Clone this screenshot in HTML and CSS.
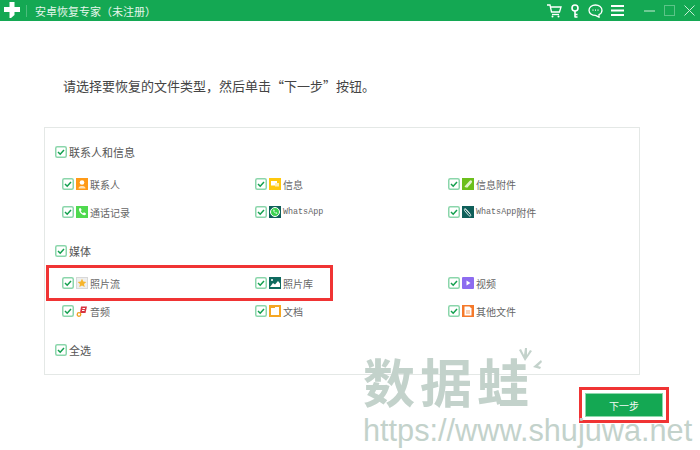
FILE: index.html
```html
<!DOCTYPE html>
<html lang="zh-CN">
<head>
    <meta charset="UTF-8">
    <title>安卓恢复专家</title>
    <link rel="stylesheet" href="styles.css">
</head>
<body>
    <svg class="defs" width="0" height="0">
        <symbol id="chk" viewBox="0 0 12 12">
            <rect x="0.75" y="0.75" width="10.5" height="10.5" rx="1.5" fill="#fff" stroke="#8bd6ab" stroke-width="1.5"/>
            <path d="M3 6l2.2 2.2L9 4" fill="none" stroke="#14a04f" stroke-width="1.5"/>
        </symbol>
    </svg>

    <header class="titlebar">
        <svg class="logo" width="16" height="16" viewBox="0 0 16 16"><path d="M5.5 0h5v5H16v5h-5.5v3L7 16H5.500v-6H0V5h5.500z" fill="#fff"/></svg>
        <span class="sep"></span>
        <span class="app-name">安卓恢复专家（未注册）</span>
        <div class="tools">
            <svg width="15" height="14" viewBox="0 0 15 14" fill="none" stroke="#fff" stroke-width="1.300"><path d="M0 1h3l1.500 7h8L14 3H4"/><path d="M5 10.500h7"/><circle cx="5.500" cy="12.500" r="1" fill="#fff" stroke="none"/><circle cx="11.500" cy="12.500" r="1" fill="#fff" stroke="none"/></svg>
            <svg width="10" height="14" viewBox="0 0 10 14" fill="none" stroke="#fff" stroke-width="1.600"><circle cx="5" cy="4" r="3"/><path d="M5 7v6.500M5 10.500h2.500M5 13h2.500"/></svg>
            <svg width="15" height="14" viewBox="0 0 15 14" fill="none" stroke="#fff" stroke-width="1.300"><path d="M7.500 1C3.800 1 1 3.300 1 6.200c0 2.900 2.800 5.200 6.500 5.200l3.500 1.800v-2.600c2-.9 3-2.500 3-4.400C14 3.300 11.200 1 7.500 1z"/><path d="M4.500 6.200h1M7 6.200h1M9.500 6.200h1"/></svg>
            <svg width="13" height="11" viewBox="0 0 13 11" fill="#fff"><rect width="13" height="2"/><rect y="4.500" width="13" height="2"/><rect y="9" width="13" height="2"/></svg>
        </div>
        <div class="win-btns">
            <svg width="11" height="11" viewBox="0 0 11 11"><path d="M0 6h11" stroke="#c9ecd6" stroke-width="1"/></svg>
            <svg width="11" height="11" viewBox="0 0 11 11"><rect x=".5" y=".5" width="10" height="10" fill="none" stroke="#5cc488"/></svg>
            <svg width="11" height="11" viewBox="0 0 11 11"><path d="M.5.500l10 10M10.500.500l-10 10" stroke="#c9ecd6" stroke-width="1"/></svg>
        </div>
    </header>

    <main class="content">
        <p class="intro">请选择要恢复的文件类型，然后单击“下一步”按钮。</p>

        <div class="panel">
            <section class="group">
                <div class="group-head"><svg class="chk"><use href="#chk"/></svg>联系人和信息</div>
                <div class="items">
                    <div class="item"><svg class="chk"><use href="#chk"/></svg>
                        <svg class="ico" viewBox="0 0 12 12"><rect width="12" height="12" fill="#ff9a17"/><circle cx="6" cy="4.500" r="2.300" fill="#fff"/><path d="M2.500 10.500c0-2 2-2.500 3.500-2.500s3.500.5 3.500 2.500z" fill="#ffe2b8"/></svg>联系人</div>
                    <div class="item"><svg class="chk"><use href="#chk"/></svg>
                        <svg class="ico" viewBox="0 0 12 12"><rect width="12" height="12" fill="#ffc80d"/><rect x="2" y="3" width="6" height="4.500" fill="#fff"/><rect x="6" y="5" width="4" height="3.500" fill="#ffeeb0"/></svg>信息</div>
                    <div class="item"><svg class="chk"><use href="#chk"/></svg>
                        <svg class="ico" viewBox="0 0 12 12"><rect width="12" height="12" fill="#6cbf1c"/><path d="M3 9l5-5.500c1-1 2 0 1 1L4.500 9.500" fill="none" stroke="#e4f5cf" stroke-width="1.300"/></svg>信息附件</div>
                    <div class="item"><svg class="chk"><use href="#chk"/></svg>
                        <svg class="ico" viewBox="0 0 12 12"><rect width="12" height="12" fill="#4fd94f"/><path d="M3 2.500l1.500-.5 1.200 2-1 1c.4 1 1.300 1.900 2.300 2.300l1-1 2 1.200-.5 1.500C6.500 10 2.500 6 3 2.500z" fill="#fff"/></svg>通话记录</div>
                    <div class="item"><svg class="chk"><use href="#chk"/></svg>
                        <svg class="ico" viewBox="0 0 12 12"><rect width="12" height="12" fill="#0f5f5a"/><circle cx="6" cy="6" r="4.500" fill="#3bd24f" stroke="#fff"/><path d="M4.300 3.800l.8-.2.600 1.200-.5.600c.3.600.8 1.100 1.400 1.400l.6-.5 1.100.6-.2.800c-2 .3-4-1.900-3.800-3.900z" fill="#fff"/></svg><span class="mono">WhatsApp</span></div>
                    <div class="item"><svg class="chk"><use href="#chk"/></svg>
                        <svg class="ico" viewBox="0 0 12 12"><rect width="12" height="12" fill="#0f5f5a"/><path d="M3 2.500l5.500 6c1 1.200-.5 2.200-1.500 1.200L2.500 4.500c-.8-1 .5-2.200 1.500-1.200l4 4.500" fill="none" stroke="#e3f0ee" stroke-width="1"/></svg><span class="mono">WhatsApp</span>附件</div>
                </div>
            </section>

            <section class="group">
                <div class="group-head"><svg class="chk"><use href="#chk"/></svg>媒体</div>
                <div class="items">
                    <div class="item"><svg class="chk"><use href="#chk"/></svg>
                        <svg class="ico" viewBox="0 0 12 12"><rect x=".5" y=".5" width="11" height="11" fill="#eee" stroke="#d8d8d8"/><path d="M6 1.800l1.300 2.800 3 .3-2.300 2 .7 3L6 8.400 3.300 9.900l.7-3-2.300-2 3-.3z" fill="#f6b42c"/></svg>照片流</div>
                    <div class="item"><svg class="chk"><use href="#chk"/></svg>
                        <svg class="ico" viewBox="0 0 12 12"><rect width="12" height="12" fill="#0f6a5f"/><path d="M1 10l3-4 2 1.500L9 4l2 2.500V10z" fill="#fff"/><circle cx="3" cy="3" r="1" fill="#fff"/></svg>照片库</div>
                    <div class="item"><svg class="chk"><use href="#chk"/></svg>
                        <svg class="ico" viewBox="0 0 12 12"><rect width="12" height="12" rx="1" fill="#8d6cf0"/><path d="M4.500 3.500l4 2.500-4 2.500z" fill="#fff"/></svg>视频</div>
                    <div class="item"><svg class="chk"><use href="#chk"/></svg>
                        <svg class="ico" viewBox="0 0 12 12" fill="none"><path d="M5 1.500h6L9.500 8H4z" fill="#d9343f"/><path d="M6.500 3.500h2.500M6 5.500h2.500" stroke="#fff"/><circle cx="3" cy="9.500" r="1.800" stroke="#f0a020" stroke-width="1.300"/></svg>音频</div>
                    <div class="item"><svg class="chk"><use href="#chk"/></svg>
                        <svg class="ico" viewBox="0 0 12 12"><rect x="1" y="1" width="10" height="10" fill="#fff" stroke="#f5a623" stroke-width="2"/><rect y="0" width="6" height="3" fill="#f5a623"/></svg>文档</div>
                    <div class="item"><svg class="chk"><use href="#chk"/></svg>
                        <svg class="ico" viewBox="0 0 12 12"><rect width="12" height="12" fill="#f5792a"/><path d="M2.500 1.500h5l2 2v7h-7z" fill="#fff"/><path d="M4 6h4M4 8h4" stroke="#f5a26a"/></svg>其他文件</div>
                </div>
            </section>

            <section class="group">
                <div class="group-head"><svg class="chk"><use href="#chk"/></svg>全选</div>
            </section>
        </div>

        <div class="actions">
            <button class="next-btn">下一步</button>
        </div>
    </main>

    <div class="mark-row"></div>
    <div class="watermark">
        <svg class="wm-paw" width="24" height="22" viewBox="0 0 24 22" fill="#c3d2cb"><path d="M7 13L1 2l2-1 3 6 1-7h2l0 7 3-5 2 1z"/><path d="M15 19l8-7 1 2-4 4 3 1-1 2z"/></svg>
        <div class="wm-cn">数据蛙</div>
        <div class="wm-url">https://www.shujuwa.net</div>
    </div>
</body>
</html>
```

FILE: styles.css
```css
* {
    box-sizing: border-box;
}

body {
    margin: 0;
    width: 700px;
    height: 450px;
    overflow: hidden;
    position: relative;
    background-color: #fff;
    color: #555;
    font-family: "Noto Sans CJK SC", "Liberation Sans", sans-serif;
}

.defs {
    position: absolute;
}

.titlebar {
    height: 21px;
    background-color: #14a853;
    display: flex;
    align-items: center;
    padding-left: 4px;
    color: #e6f6ec;
}

.logo {
    margin-top: -1px;
}

.sep {
    width: 1px;
    height: 12px;
    margin: 0 8px 0 6px;
    background-color: #4cbd7d;
}

.app-name {
    font-size: 11px;
}

.tools {
    margin-left: auto;
    display: flex;
    align-items: center;
    gap: 8px;
}

.win-btns {
    display: flex;
    align-items: center;
    gap: 9px;
    margin: 0 5px 0 20px;
}

.content {
    padding-top: 55px;
}

.intro {
    margin: 0 0 31px 63px;
    height: 20px;
    line-height: 20px;
    font-size: 13px;
    color: #444;
}

.panel {
    width: 596px;
    margin-left: 44px;
    height: 248px;
    padding: 10px 0 0 10px;
    border: 1px solid #e4e8e6;
}

.group {
    margin-bottom: 11px;
}

.group-head {
    height: 28px;
    display: flex;
    align-items: center;
    gap: 2px;
    font-size: 11px;
    color: #555;
}

.chk {
    width: 12px;
    height: 12px;
    flex: none;
}

.items {
    margin: 4px 0 0 7px;
    display: grid;
    grid-template-columns: repeat(3, 193px);
    grid-auto-rows: 28px;
}

.item {
    display: flex;
    align-items: center;
    font-size: 10px;
    color: #666;
}

.ico {
    width: 12px;
    height: 12px;
    margin: 0 2px;
    flex: none;
}

.mono {
    font-family: "Liberation Mono", monospace;
    font-size: 8.400px;
}

.actions {
    display: flex;
    justify-content: flex-end;
    padding-right: 37px;
    margin-top: 18px;
}

.next-btn {
    width: 78px;
    height: 24px;
    border: 1px solid #8fd8ad;
    background-color: #14a853;
    color: #f2fbf5;
    font-family: inherit;
    font-size: 10px;
    outline: 3px solid #f03434;
    outline-offset: 3px;
}

.mark-row {
    position: absolute;
    left: 46px;
    top: 265px;
    width: 287px;
    height: 36px;
    border: 3px solid #f03434;
}

.watermark {
    position: absolute;
    left: 363px;
    top: 349px;
    color: #c3d2cb;
    pointer-events: none;
}

.wm-paw {
    position: absolute;
    left: 155px;
    top: -1px;
}

.wm-cn {
    font-size: 52px;
    line-height: 64px;
    font-weight: 700;
    letter-spacing: 5px;
}

.wm-url {
    font-family: "Liberation Sans", sans-serif;
    font-size: 30.700px;
    line-height: 36px;
    white-space: nowrap;
}
```
